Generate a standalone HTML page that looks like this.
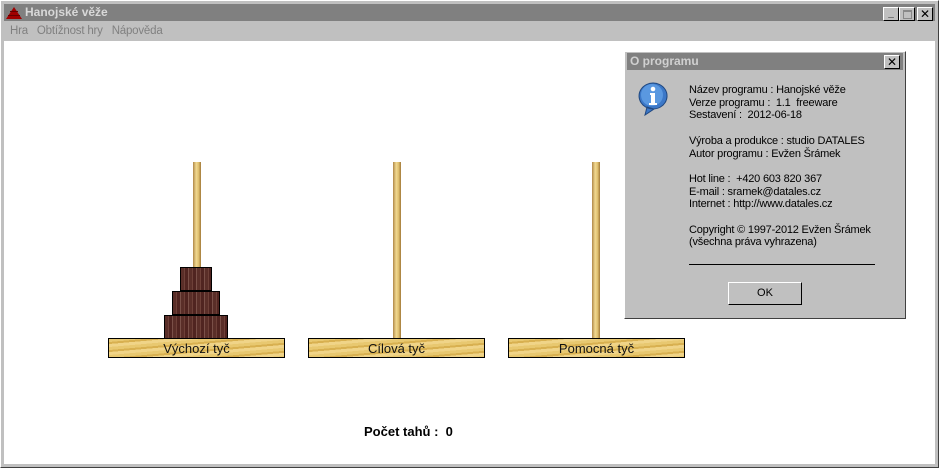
<!DOCTYPE html>
<html><head><meta charset="utf-8"><style>
body{margin:0;width:939px;height:468px;overflow:hidden;background:#c0c0c0;font-family:"Liberation Sans",sans-serif;position:relative}
.a{position:absolute}
.peg{position:absolute;width:8px;top:162px;height:176px;background:linear-gradient(90deg,#b08848,#f0d890 40%,#e0c070 70%,#a07838)}
.base{position:absolute;top:338px;width:175px;height:18px;border:1px solid #000;background:repeating-linear-gradient(175deg,#e8c870 0 3px,#d8b050 3px 5px,#f0d488 5px 8px);font-size:13px;text-align:center;line-height:19px;color:#111}
.disk{position:absolute;border:1px solid #000;background:repeating-linear-gradient(90deg,#5a2e28 0 3px,#6e4038 3px 4px,#502420 4px 7px,#7a5048 7px 8px)}
.dl{position:absolute;left:689px;font-size:11px;letter-spacing:-0.2px;line-height:12.7px;color:#000}
</style></head><body>
<div class="a" style="left:0;top:0;width:937px;height:466px;border:1px solid #fff;border-right-color:#404040;border-bottom-color:#404040"></div>
<div class="a" style="left:4px;top:4px;width:931px;height:17px;background:#808080"></div>
<svg class="a" style="left:5px;top:6px" width="18" height="14"><polygon points="9,1 17,13 1,13" fill="#a00000"/><rect x="3" y="9" width="12" height="1" fill="#600"/><rect x="5" y="5" width="8" height="1" fill="#600"/></svg>
<div class="a" style="left:25px;top:4px;font-size:12px;font-weight:bold;color:#d8d8d8;line-height:17px">Hanojské věže</div>
<div class="a" style="left:883px;top:7px;width:14px;height:12px;background:#c0c0c0;border:1px solid;border-color:#fff #000 #000 #fff;font-size:10px;text-align:center;line-height:12px;font-weight:bold">_</div>
<div class="a" style="left:899px;top:7px;width:14px;height:12px;background:#c0c0c0;border:1px solid;border-color:#fff #000 #000 #fff"><div style="margin:2px 3px;width:7px;height:6px;border:1px solid #888;border-top-width:2px"></div></div>
<div class="a" style="left:917px;top:7px;width:14px;height:12px;background:#c0c0c0;border:1px solid;border-color:#fff #000 #000 #fff;font-size:12px;text-align:center;line-height:12px">✕</div>
<div class="a" style="left:10px;top:25px;font-size:11.5px;letter-spacing:-0.2px;color:#808080">Hra&nbsp;&nbsp; Obtížnost hry&nbsp;&nbsp; Nápověda</div>
<div class="a" style="left:4px;top:41px;width:931px;height:423px;background:#fff"></div>
<div class="peg" style="left:193px"></div><div class="peg" style="left:393px"></div><div class="peg" style="left:592px"></div>
<div class="disk" style="left:180px;top:267px;width:30px;height:22px"></div>
<div class="disk" style="left:172px;top:291px;width:46px;height:22px"></div>
<div class="disk" style="left:164px;top:315px;width:62px;height:22px"></div>
<div class="base" style="left:108px">Výchozí tyč</div>
<div class="base" style="left:308px">Cílová tyč</div>
<div class="base" style="left:508px">Pomocná tyč</div>
<div class="a" style="left:364px;top:424px;font-size:13px;font-weight:bold">Počet tahů :&nbsp; 0</div>
<div class="a" style="left:624px;top:51px;width:280px;height:266px;background:#c0c0c0;border:1px solid;border-color:#fff #404040 #404040 #fff"></div>
<div class="a" style="left:627px;top:53px;width:276px;height:17px;background:#808080"></div>
<div class="a" style="left:630px;top:53px;font-size:12px;font-weight:bold;color:#d0d0d0;line-height:17px">O programu</div>
<div class="a" style="left:884px;top:55px;width:14px;height:12px;background:#c0c0c0;border:1px solid;border-color:#fff #000 #000 #fff;font-size:12px;text-align:center;line-height:12px">✕</div>
<svg class="a" style="left:637px;top:81px" width="34" height="36"><path d="M16 2a14 13 0 1 0 0.1 0zM10 26l-2 8 9-6z" fill="#3c78c8" stroke="#204880"/><circle cx="15" cy="14" r="11" fill="#5a98e0"/><circle cx="16" cy="8" r="2.3" fill="#fff"/><path d="M13 12h5v10h2v2h-8v-2h2v-8h-1z" fill="#fff"/></svg>
<div class="dl" style="top:84px">Název programu : Hanojské věže<br>Verze programu :&nbsp; 1.1&nbsp; freeware<br>Sestavení :&nbsp; 2012-06-18<br><br>Výroba a produkce : studio DATALES<br>Autor programu : Evžen Šrámek<br><br>Hot line :&nbsp; +420 603 820 367<br>E-mail : sramek@datales.cz<br>Internet : http://www.datales.cz<br><br>Copyright © 1997-2012 Evžen Šrámek<br>(všechna práva vyhrazena)</div>
<div class="a" style="left:689px;top:264px;width:186px;height:1px;background:#000"></div>
<div class="a" style="left:728px;top:282px;width:72px;height:21px;border:1px solid;border-color:#fff #000 #000 #fff;font-size:11px;text-align:center;line-height:21px">OK</div>
</body></html>
